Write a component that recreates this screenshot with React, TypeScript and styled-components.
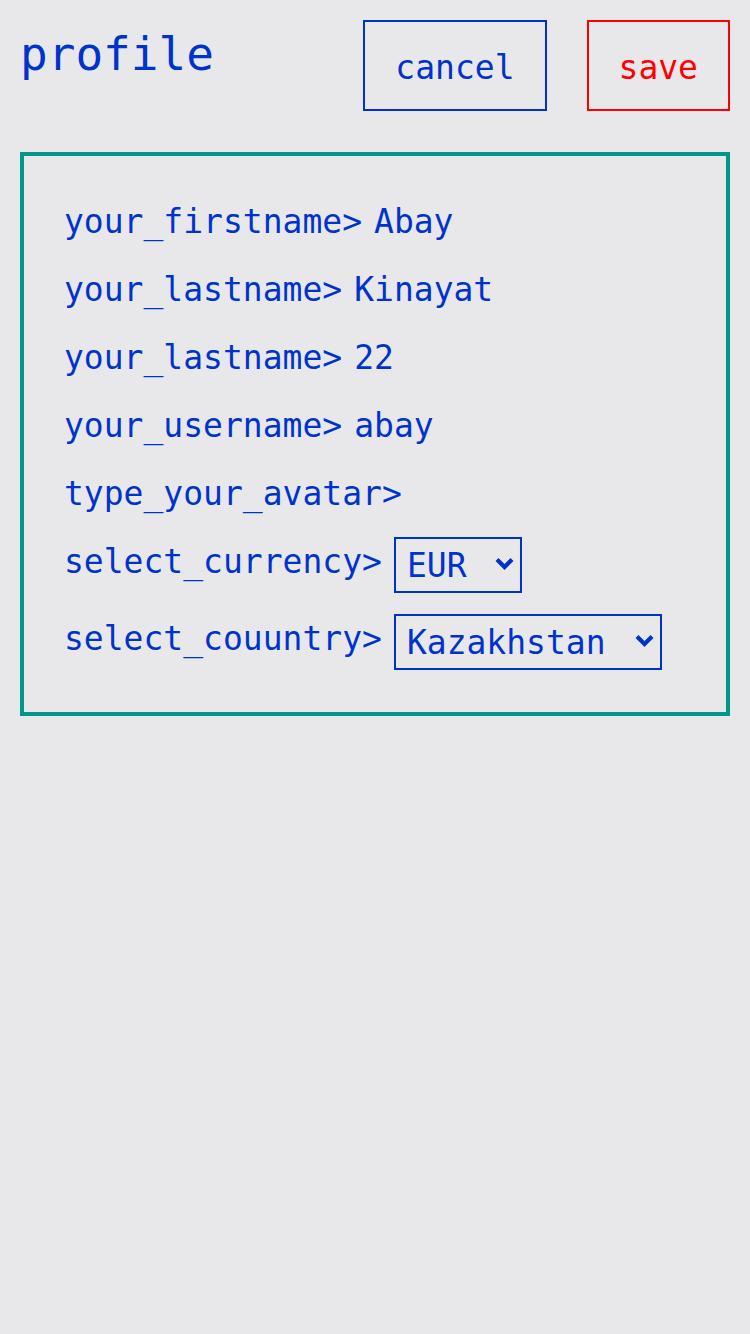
import React from 'react';
import styled, { createGlobalStyle } from 'styled-components';

const GlobalStyle = createGlobalStyle`
  html, body {
    margin: 0;
    padding: 0;
    background: #e8e8eb;
  }
  body {
    font-family: "DejaVu Sans Mono", "Liberation Mono", monospace;
    color: #0033cc;
  }
`;

const Page = styled.div`
  min-height: 1334px;
  padding: 20px;
  box-sizing: border-box;
  background: #e8e8eb;
`;

const Header = styled.header`
  display: flex;
  align-items: flex-start;
  justify-content: space-between;
`;

const Title = styled.h1`
  margin: 11px 0 0;
  font-size: 46px;
  line-height: 46px;
  font-weight: normal;
  color: #0033cc;
`;

const Actions = styled.div`
  display: flex;
  gap: 40px;
`;

const ActionButton = styled.button<{ $tone: 'blue' | 'red' }>`
  display: flex;
  align-items: center;
  justify-content: center;
  height: 91px;
  padding: 3px 30px 0;
  box-sizing: border-box;
  background: transparent;
  border: 2px solid ${p => (p.$tone === 'red' ? '#ff0000' : '#0033cc')};
  color: ${p => (p.$tone === 'red' ? '#ff0000' : '#0033cc')};
  font-family: inherit;
  font-size: 33px;
  cursor: pointer;
`;

const Card = styled.section`
  margin-top: 41px;
  border: 4px solid #009688;
  padding: 32px 40px 30px;
`;

const Row = styled.div`
  display: flex;
  align-items: flex-start;
  gap: 12px;
  font-size: 33px;
  line-height: 68px;
`;

const SelectRow = styled(Row)`
  min-height: 77px;
`;

const Label = styled.span`
  white-space: nowrap;
`;

const Value = styled.span`
  white-space: nowrap;
`;

const SelectBox = styled.label`
  display: flex;
  align-items: center;
  margin-top: 9px;
  height: 56px;
  box-sizing: border-box;
  padding: 0 6px 0 11px;
  border: 2px solid #0033cc;
`;

const NativeSelect = styled.select`
  appearance: none;
  -webkit-appearance: none;
  border: none;
  background: transparent;
  padding: 0;
  margin: 0;
  outline: none;
  font-family: inherit;
  font-size: 33px;
  color: #0033cc;
`;

const Chevron = styled.svg`
  display: block;
  flex: none;
  margin-bottom: 3px;
`;

function Dropdown({ value, options, width }: { value: string; options: string[]; width: number }) {
  return (
    <SelectBox>
      <NativeSelect defaultValue={value} style={{ width }}>
        {options.map(o => (
          <option key={o} value={o}>{o}</option>
        ))}
      </NativeSelect>
      <Chevron width="19" height="13" viewBox="0 0 19 13">
        <path d="M2 2.5 L9.5 10 L17 2.5" fill="none" stroke="#0033cc" strokeWidth="4.2" />
      </Chevron>
    </SelectBox>
  );
}

export default function App() {
  return (
    <>
      <GlobalStyle />
      <Page>
        <Header>
          <Title>profile</Title>
          <Actions>
            <ActionButton $tone="blue">cancel</ActionButton>
            <ActionButton $tone="red">save</ActionButton>
          </Actions>
        </Header>

        <Card>
          <Row>
            <Label>your_firstname&gt;</Label>
            <Value>Abay</Value>
          </Row>
          <Row>
            <Label>your_lastname&gt;</Label>
            <Value>Kinayat</Value>
          </Row>
          <Row>
            <Label>your_lastname&gt;</Label>
            <Value>22</Value>
          </Row>
          <Row>
            <Label>your_username&gt;</Label>
            <Value>abay</Value>
          </Row>
          <Row>
            <Label>type_your_avatar&gt;</Label>
          </Row>
          <SelectRow>
            <Label>select_currency&gt;</Label>
            <Dropdown value="EUR" options={['EUR', 'USD', 'KZT']} width={88} />
          </SelectRow>
          <SelectRow>
            <Label>select_couuntry&gt;</Label>
            <Dropdown value="Kazakhstan" options={['Kazakhstan', 'Russia', 'USA']} width={228} />
          </SelectRow>
        </Card>
      </Page>
    </>
  );
}
